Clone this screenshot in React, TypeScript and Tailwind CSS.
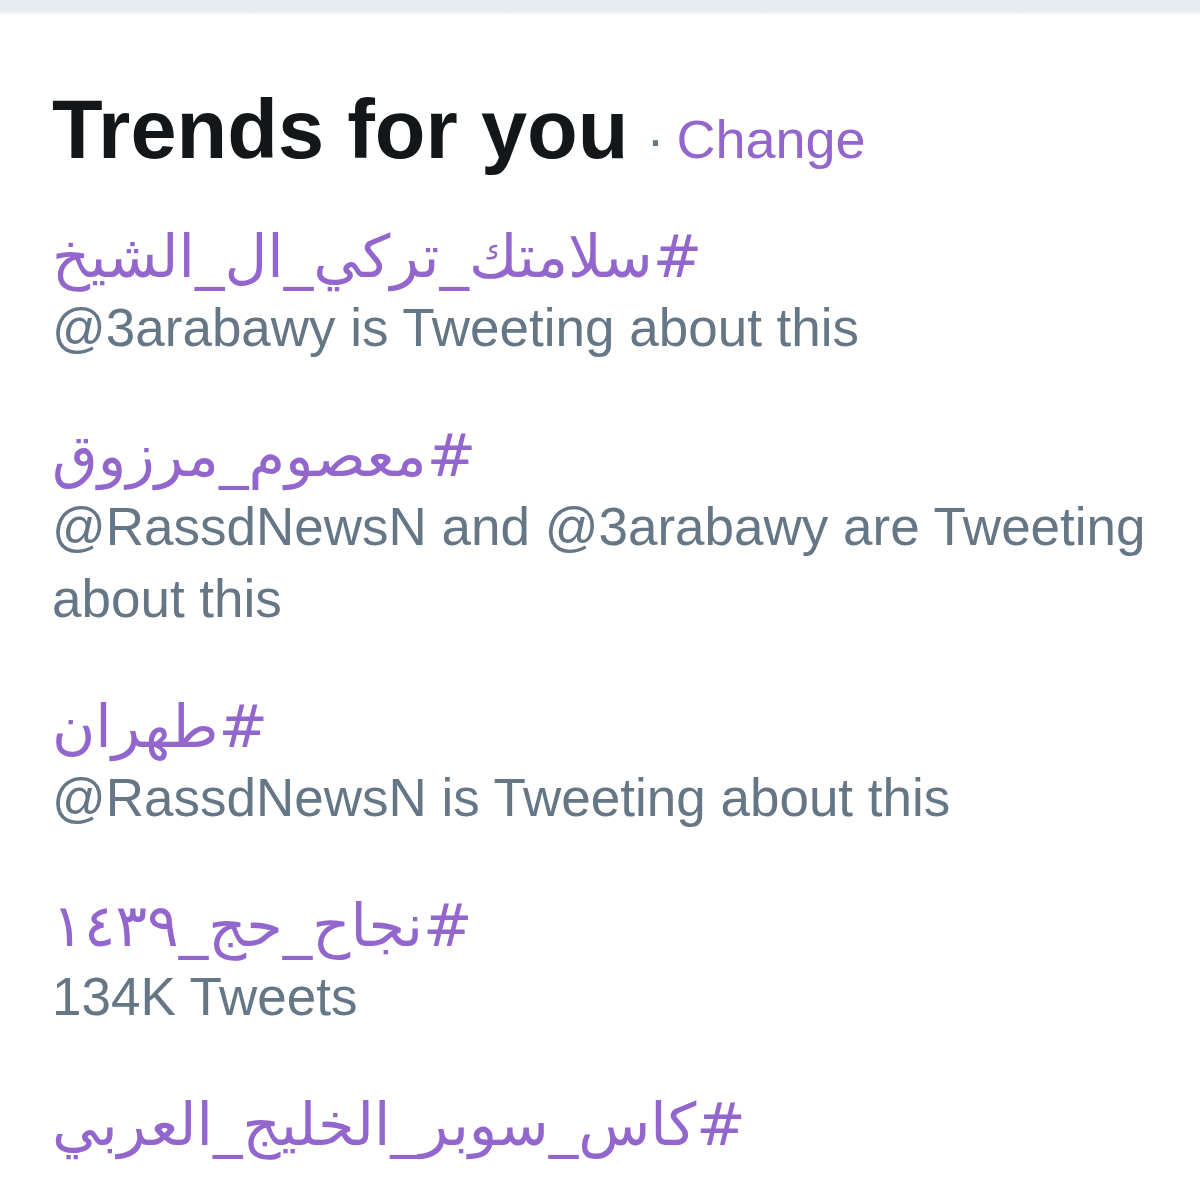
const trends = [
  { tag: "#سلامتك_تركي_ال_الشيخ", meta: "@3arabawy is Tweeting about this" },
  { tag: "#معصوم_مرزوق", meta: "@RassdNewsN and @3arabawy are Tweeting about this" },
  { tag: "#طهران", meta: "@RassdNewsN is Tweeting about this" },
  { tag: "#نجاح_حج_١٤٣٩", meta: "134K Tweets" },
  { tag: "#كاس_سوبر_الخليج_العربي", meta: "" },
]

export default function App() {
  return (
    <div className="h-[1195px] w-[1200px] overflow-hidden bg-white font-['Liberation_Sans','DejaVu_Sans',sans-serif]">
      <div className="h-[16px] bg-gradient-to-b from-[#e6ecf0] from-70% to-white" />
      <div className="pl-[52px] pr-[20px] pt-[64px]">
        <div className="flex items-baseline leading-[100px]">
          <h2 className="text-[83px] font-bold text-[#14171a]">Trends for you</h2>
          <span className="ml-[18px] text-[54px] text-[#657786]">·</span>
          <a className="ml-[12px] text-[54px] text-[#9266cc]">Change</a>
        </div>

        <div className="mt-[33px] flex flex-col gap-[57px]">
          {trends.map((t) => (
            <div key={t.tag}>
              <div dir="rtl" className="text-left">
                <span className="font-['DejaVu_Sans',sans-serif] text-[59px] leading-[70px] text-[#9266cc]">
                  {t.tag}
                </span>
              </div>
              {t.meta && (
                <p className="text-[53px] leading-[72px] text-[#657786]">{t.meta}</p>
              )}
            </div>
          ))}
        </div>
      </div>
    </div>
  )
}
